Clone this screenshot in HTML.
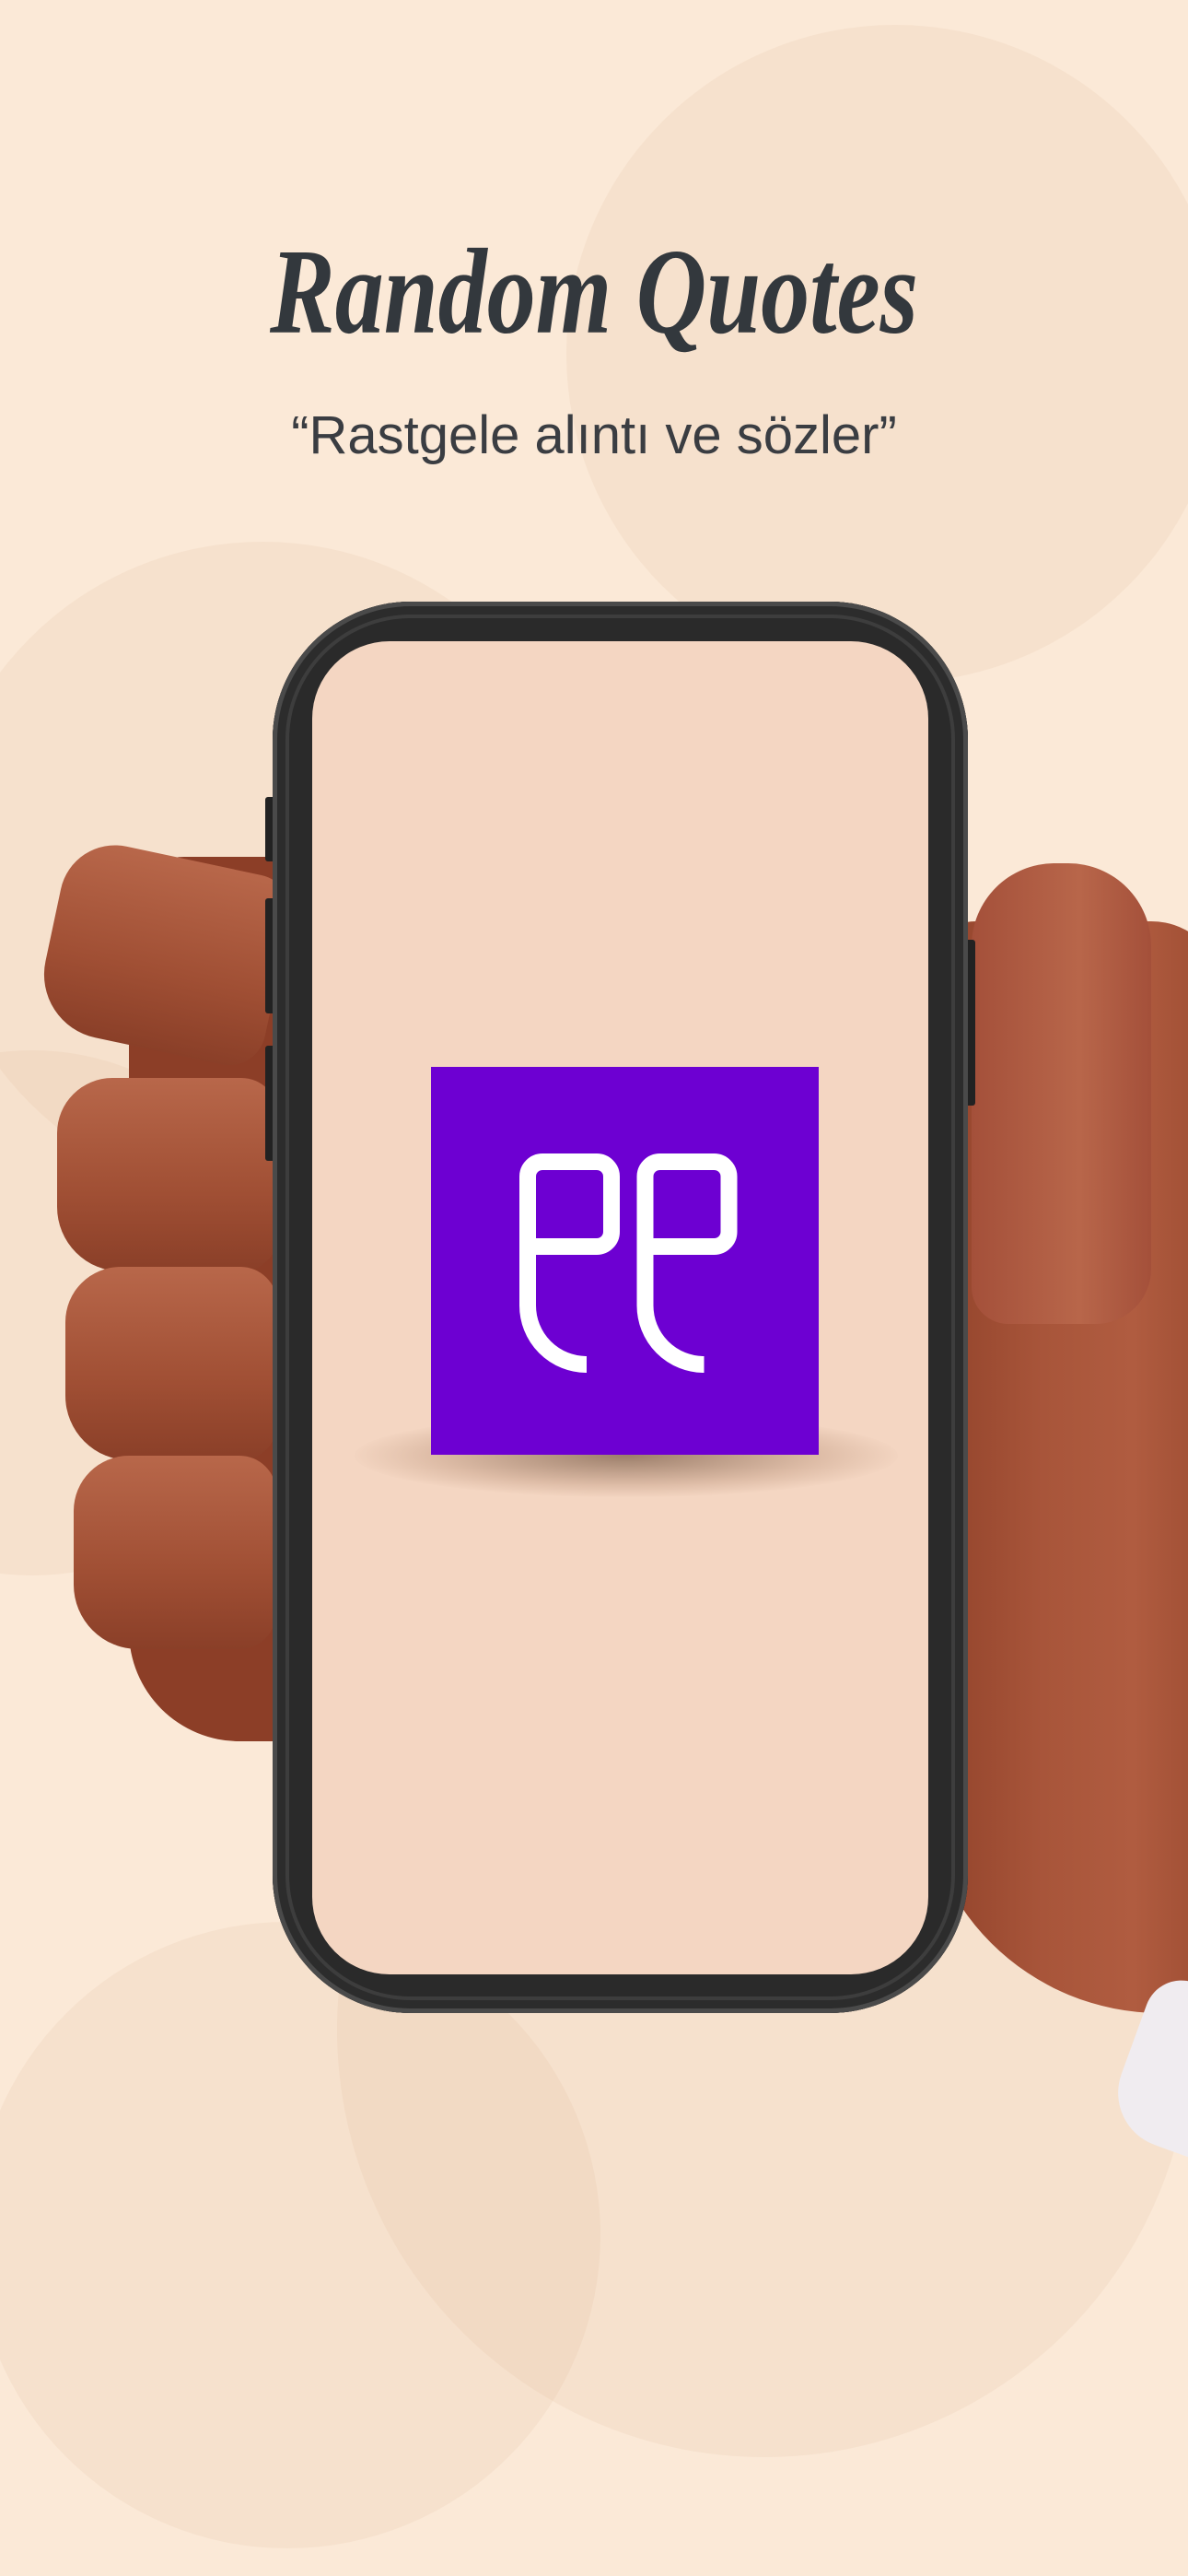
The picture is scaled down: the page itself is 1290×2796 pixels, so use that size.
<!DOCTYPE html>
<html><head><meta charset="utf-8"><style>
html,body{margin:0;padding:0}
body{width:1290px;height:2796px;position:relative;overflow:hidden;background:#fbe9d7;font-family:"Liberation Sans",sans-serif}
.a{position:absolute}
.c{position:absolute;border-radius:50%;background:rgba(220,180,145,.15)}
.f{position:absolute;background:linear-gradient(180deg,#b8674a,#a04f34 60%,#8a3f28);border-radius:60px 40px 40px 70px}
</style></head><body>
<div class="c" style="left:615px;top:27px;width:714px;height:714px"></div>
<div class="c" style="left:-72px;top:588px;width:714px;height:714px"></div>
<div class="c" style="left:-250px;top:1140px;width:570px;height:570px"></div>
<div class="c" style="left:366px;top:1739px;width:928px;height:928px"></div>
<div class="c" style="left:-28px;top:2086px;width:680px;height:680px"></div>

<div class="a" style="left:0;top:252px;width:1290px;text-align:center;font-family:'Liberation Serif',serif;font-style:italic;font-weight:bold;font-size:106px;color:#33383d;transform:scaleY(1.25);line-height:130px">Random Quotes</div>
<div class="a" style="left:0;top:440px;width:1290px;text-align:center;font-size:58px;color:#3a3d42;line-height:66px">“Rastgele alıntı ve sözler”</div>

<!-- hand right -->
<div class="a" style="left:1000px;top:1000px;width:330px;height:1185px;background:linear-gradient(90deg,#8f4129,#a8553a 40%,#b05c40 70%,#9b4a30);border-radius:60px 80px 60px 260px"></div>
<div class="a" style="left:1055px;top:937px;width:195px;height:500px;background:linear-gradient(90deg,#a4503a,#b8664a 60%,#a4503a);border-radius:90px 90px 60px 40px"></div>
<div class="a" style="left:1225px;top:2150px;width:100px;height:180px;background:#f0ecf0;border-radius:40px 0 0 60px;transform:rotate(20deg)"></div>
<!-- palm left -->
<div class="a" style="left:140px;top:930px;width:170px;height:960px;background:#8c3e27;border-radius:60px 0 0 120px"></div>
<div class="f" style="left:54px;top:930px;width:250px;height:210px;transform:rotate(12deg)"></div>
<div class="f" style="left:62px;top:1170px;width:240px;height:210px"></div>
<div class="f" style="left:71px;top:1375px;width:230px;height:210px"></div>
<div class="f" style="left:80px;top:1580px;width:220px;height:210px"></div>

<!-- buttons -->
<div class="a" style="left:288px;top:865px;width:12px;height:70px;background:#222;border-radius:3px"></div>
<div class="a" style="left:288px;top:975px;width:12px;height:125px;background:#222;border-radius:3px"></div>
<div class="a" style="left:288px;top:1135px;width:12px;height:125px;background:#222;border-radius:3px"></div>
<div class="a" style="left:1047px;top:1020px;width:12px;height:180px;background:#222;border-radius:3px"></div>
<!-- phone -->
<div class="a" style="left:296px;top:653px;width:755px;height:1532px;background:#2a2a2a;border-radius:150px;box-shadow:inset 0 0 0 5px #4a4a4a,inset 0 0 0 14px #2c2c2c,inset 0 0 0 18px #3d3d3d"></div>
<div class="a" style="left:339px;top:696px;width:669px;height:1447px;background:#f4d6c2;border-radius:84px"></div>
<div class="a" style="left:385px;top:1535px;width:590px;height:90px;border-radius:50%;background:radial-gradient(ellipse at center,rgba(120,90,70,.7),rgba(180,140,115,.35) 50%,rgba(244,214,194,0) 72%)"></div>
<div class="a" style="left:468px;top:1158px;width:421px;height:421px;background:#6d00d2"></div>
<svg class="a" style="left:0;top:0" width="1290" height="2796">
<g fill="none" stroke="#fff" stroke-width="18">
<path transform="translate(573,1261)" d="M64 220 A64 64 0 0 1 0 156 V16 A16 16 0 0 1 16 0 H75 A16 16 0 0 1 91 16 V76 A16 16 0 0 1 75 92 H0"/>
<path transform="translate(700.5,1261)" d="M64 220 A64 64 0 0 1 0 156 V16 A16 16 0 0 1 16 0 H75 A16 16 0 0 1 91 16 V76 A16 16 0 0 1 75 92 H0"/>
</g></svg>
</body></html>
